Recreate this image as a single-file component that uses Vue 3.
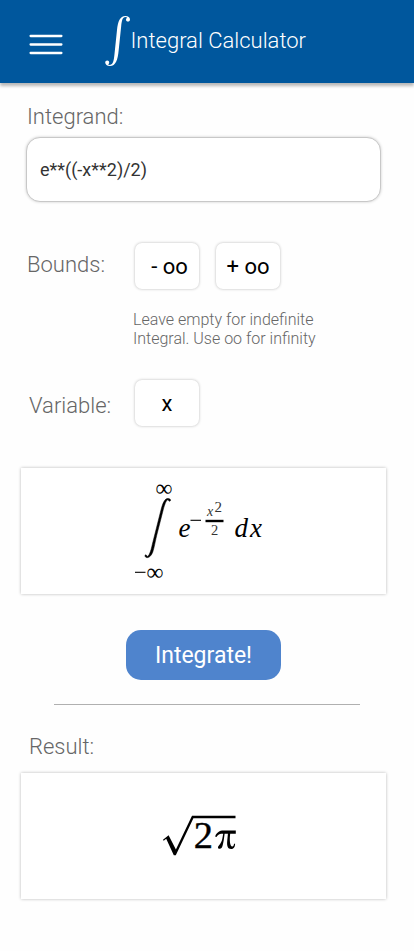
<script setup>
import { ref } from 'vue'

const integrand = ref('e**((-x**2)/2)')
const lower = ref('- oo')
const upper = ref('+ oo')
const variable = ref('x')
</script>

<template>
  <div class="page">
    <header class="bar">
      <svg class="menu" viewBox="0 0 34 22" aria-label="Menu">
        <path d="M1.6 2H32.4M1.6 10.5H32.4M1.6 19H32.4" />
      </svg>
      <svg class="sign" viewBox="0 0 26 52">
        <path d="M4.9 49.9C8.2 49.7 8.8 45 9.4 40L12 15C12.9 6.5 15 1 20.4 1C23.2 1 25 2.5 25 4.4C25 5.8 24.1 6.6 23 6.6C21.8 6.6 21 5.8 21 4.7C21 3.7 21.6 3.1 22.3 2.7C21.8 2.3 21.2 2.1 20.5 2.1C17.4 2.2 16.8 6 16.2 11L13.7 35C12.8 45 10.7 51 5 51C2 51 0.2 49.5 0.2 47.6C0.2 46.2 1.1 45.4 2.2 45.4C3.4 45.4 4.2 46.2 4.2 47.4C4.2 48.3 3.7 48.9 3 49.3C3.5 49.7 4.1 49.9 4.9 49.9Z" />
      </svg>
      <h1 class="title">Integral Calculator</h1>
    </header>

    <main class="content">
      <label class="label integrand-label">Integrand:</label>
      <div class="integrand">{{ integrand }}</div>

      <div class="row bounds">
        <span class="label">Bounds:</span>
        <div class="box lower">{{ lower }}</div>
        <div class="box upper">{{ upper }}</div>
      </div>
      <p class="hint">Leave empty for indefinite<br />Integral. Use oo for infinity</p>

      <div class="row variable">
        <span class="label">Variable:</span>
        <div class="box single">{{ variable }}</div>
      </div>

      <section class="card preview">
        <svg class="math" viewBox="0 0 365 126">
          <text class="serif" x="134.5" y="28" font-size="24" textLength="17" lengthAdjust="spacingAndGlyphs">∞</text>
          <path class="integral" d="M149.4 31.6C148.7 30.5 147.4 30.2 146 30.6C142.8 31.6 141 37.5 139.2 45L131.4 76C129.7 84 128 88 126.2 88.4C125.5 88.5 125.8 86.8 124.7 86.8C123.8 86.8 123.8 88.4 124.6 89.1C126.5 90.6 130 89 131.8 84C133.2 80 134.4 72.5 136.3 65L142.3 41.5C144 35.2 145.5 31.9 147 31.7C147.7 31.6 147.3 33.2 148.5 33.2C149.3 33.2 149.8 32.5 149.4 31.6Z" />
          <path class="minus" d="M114 104.3H124.5" />
          <text class="serif" x="125.5" y="111.5" font-size="24" textLength="17" lengthAdjust="spacingAndGlyphs">∞</text>
          <text class="serif it" x="157.5" y="68.6" font-size="27">e</text>
          <path class="minus" d="M169.5 52.3H180" />
          <text class="serif it small" x="186" y="48" font-size="14">x</text>
          <text class="serif small" x="193.5" y="43.5" font-size="15">2</text>
          <path class="fraction" d="M184.5 53H202.5" />
          <text class="serif small" x="190" y="67" font-size="14.5">2</text>
          <text class="serif it" x="213.5" y="68.6" font-size="27" textLength="27.5">dx</text>
        </svg>
      </section>

      <button class="go" type="button">Integrate!</button>
      <hr class="rule" />

      <span class="label result-label">Result:</span>
      <section class="card result">
        <svg class="math" viewBox="0 0 365 126">
          <path d="M142 66.8L147.6 62.2L154.9 76.5L171 42.8H214.5V45.2H172.4L154.8 82.3H152.8L145.2 65.8L142.7 67.8Z" />
          <text class="serif digit" x="172.7" y="75.2" font-size="38.5">2</text>
          <path d="M196.2 60C199 57.7 200.5 57.6 202.5 57.6H214.8V60.7H209.2C208.5 66 208.7 71.5 210.5 73.2C211.7 74.2 212.8 73 213 70.8H214.1C214 74.5 212.4 76 210.2 76C206.5 76 205.8 72.5 206.2 68L206.9 60.7H203.6C202.8 67.5 202 72.7 200.7 74.8C199.5 76.5 196.7 76 197 74.2C197.2 72.4 200 71 201.2 66.2L202.2 60.7C198.9 60.7 197.4 61.2 195.5 64L194.1 63.4C194.5 62 195.2 60.8 196.2 60Z" />
        </svg>
      </section>
    </main>
  </div>
</template>

<style>
body {
  background: #fefefe;
}
</style>

<style scoped>
.page {
  height: 951px;
  font-family: Roboto, "Liberation Sans", sans-serif;
  overflow: hidden;
}
.bar {
  display: flex;
  align-items: flex-start;
  height: 83px;
  background: #00579d;
  box-shadow: 0 3px 3px rgba(0, 0, 0, 0.28);
}
.menu {
  width: 34px;
  height: 22px;
  margin: 34px 0 0 29px;
  fill: none;
  stroke: #fff;
  stroke-width: 2.3;
  stroke-linecap: round;
}
.sign {
  width: 26px;
  height: 52px;
  margin: 15px 0 0 42px;
  fill: #fff;
}
.title {
  margin: 27px 0 0 -0.5px;
  font-size: 22px;
  font-weight: 300;
  line-height: 28px;
  color: #fff;
  white-space: nowrap;
}
.content {
  display: flex;
  flex-direction: column;
  align-items: flex-start;
}
.label {
  font-size: 22px;
  font-weight: 300;
  line-height: 28px;
  color: #666;
}
.integrand-label {
  margin: 20px 0 0 27px;
}
.integrand {
  box-sizing: border-box;
  width: 355px;
  height: 65px;
  margin: 6px 0 0 26px;
  padding-left: 13px;
  border: 1px solid #c8c8c8;
  border-radius: 14px;
  background: #fff;
  box-shadow: 0 0 3px rgba(0, 0, 0, 0.2);
  font-size: 18px;
  line-height: 63px;
  color: #333;
}
.row {
  display: flex;
  align-items: flex-start;
}
.bounds {
  margin: 41px 0 0 27px;
}
.bounds .label {
  width: 108px;
  margin-top: 8px;
}
.box {
  box-sizing: border-box;
  width: 64px;
  height: 46px;
  border-radius: 7px;
  background: #fff;
  box-shadow: 0 0 3px rgba(0, 0, 0, 0.28);
  font-size: 22px;
  line-height: 48px;
  color: #000;
  text-align: center;
  white-space: nowrap;
}
.lower {
  padding-left: 5px;
}
.upper {
  margin-left: 17px;
}
.hint {
  margin: 21px 0 0 133px;
  font-size: 16px;
  font-weight: 300;
  line-height: 19px;
  color: #666;
}
.variable {
  margin: 32px 0 0 29px;
}
.variable .label {
  width: 106px;
  margin-top: 12px;
}
.card {
  width: 365px;
  height: 126px;
  margin-left: 21px;
  background: #fff;
  box-shadow: 0 0 3px rgba(0, 0, 0, 0.28);
}
.preview {
  margin-top: 42px;
}
.math {
  display: block;
  width: 365px;
  height: 126px;
}
.serif {
  font-family: "Liberation Serif", serif;
}
.it {
  font-style: italic;
}
.small {
  fill: #333;
}
.integral {
  stroke: #000;
  stroke-width: 0.5;
}
.digit {
  stroke: #000;
  stroke-width: 0.4;
}
.minus {
  stroke: #000;
  stroke-width: 1.1;
}
.fraction {
  stroke: #000;
  stroke-width: 2.4;
}
.go {
  width: 155px;
  height: 50px;
  margin: 36px 0 0 126px;
  padding: 2px 0 0;
  border: 0;
  border-radius: 15px;
  background: #4f84cd;
  font: 400 23px/48px Roboto, sans-serif;
  color: #fff;
}
.rule {
  width: 306px;
  height: 1px;
  margin: 24px 0 0 54px;
  border: 0;
  background: #b0b0b0;
}
.result-label {
  margin: 28px 0 0 29px;
}
.result {
  margin-top: 12px;
}
</style>
